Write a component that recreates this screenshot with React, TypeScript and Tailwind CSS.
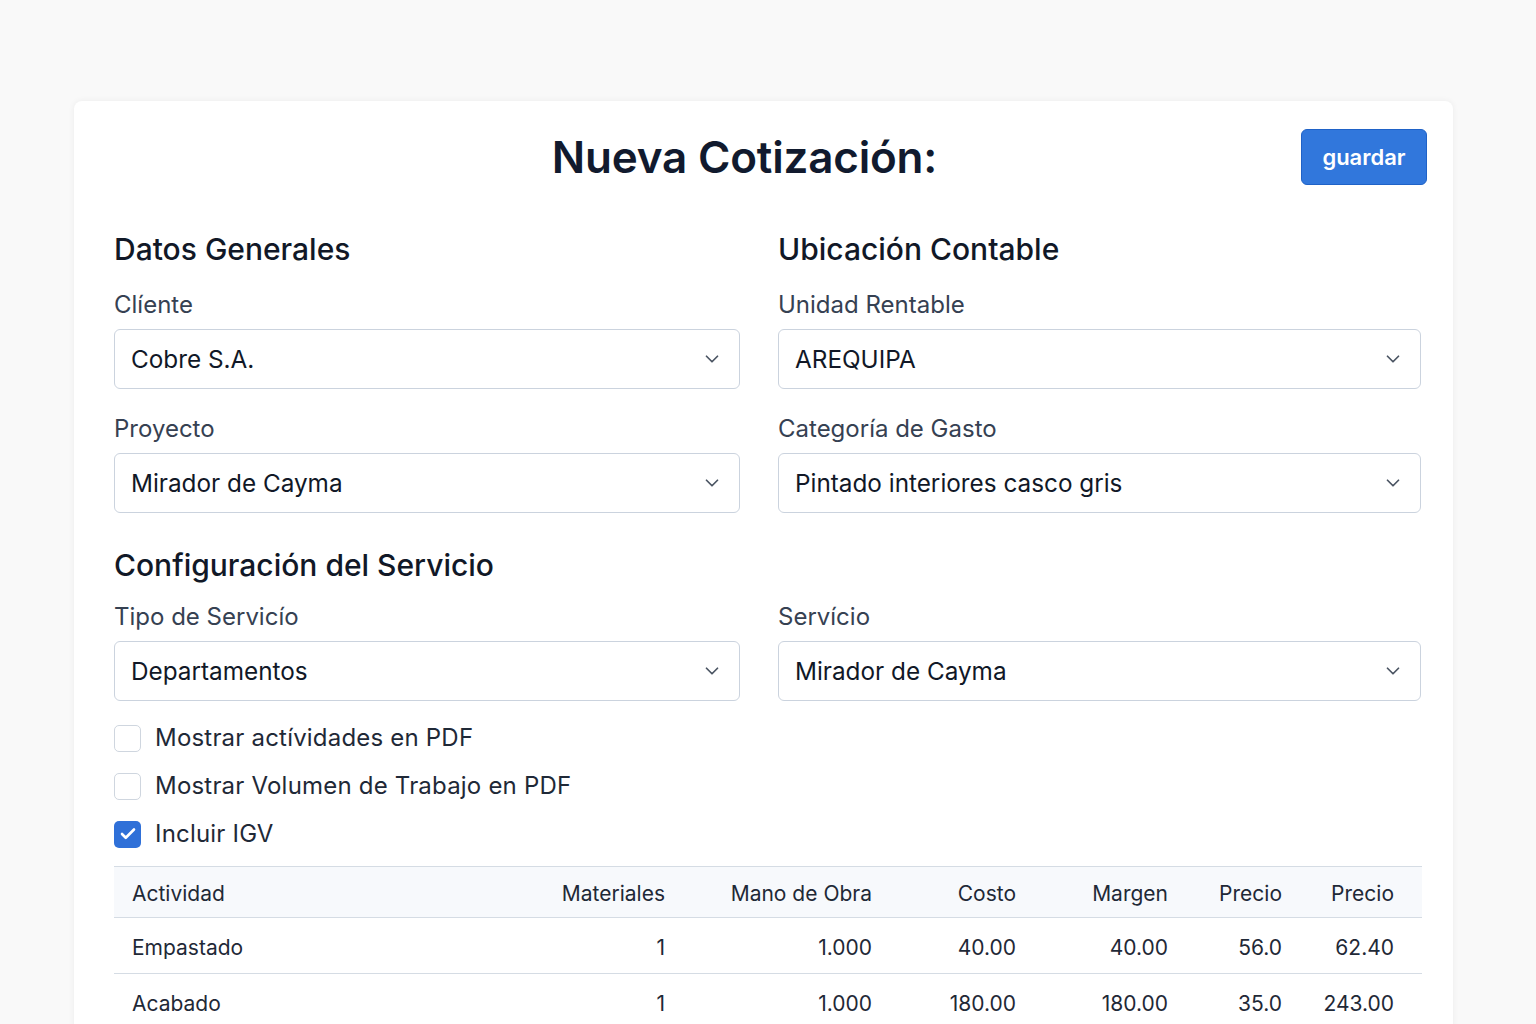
import React from "react";
import { ChevronDown, Check } from "lucide-react";

const rows = [
  { name: "Empastado", mat: "1", mano: "1.000", costo: "40.00", margen: "40.00", p1: "56.0", p2: "62.40" },
  { name: "Acabado", mat: "1", mano: "1.000", costo: "180.00", margen: "180.00", p1: "35.0", p2: "243.00" },
];

function Field({ label, value }: { label: string; value: string }) {
  return (
    <div>
      <div className="h-8 leading-8 text-[24px] text-[#364152]">{label}</div>
      <div className="mt-2 h-[60px] flex items-center justify-between rounded-md border border-[#cbd3de] bg-white pl-4 pr-4">
        <span className="text-[24.3px] text-[#111827]">{value}</span>
        <ChevronDown size={22} strokeWidth={1.9} className="text-[#4b5563]" />
      </div>
    </div>
  );
}

function Box({ checked, label }: { checked?: boolean; label: string }) {
  return (
    <label className="flex items-center gap-[14px] h-12">
      {checked ? (
        <span className="w-[27px] h-[27px] rounded-[5px] bg-[#2f70d8] flex items-center justify-center">
          <Check size={18} strokeWidth={3.5} className="text-white" />
        </span>
      ) : (
        <span className="w-[27px] h-[27px] rounded-[5px] border border-[#cfd6df] bg-white" />
      )}
      <span className="text-[24px] tracking-[0.2px] text-[#1f2937]">{label}</span>
    </label>
  );
}

export default function App() {
  return (
    <div className="min-h-screen bg-[#f9f9f9] pt-[101px] font-['Inter',sans-serif]">
      <div className="ml-[74px] w-[1379px] h-[940px] overflow-hidden rounded-lg bg-white shadow-[0_0_6px_rgba(0,0,0,0.06)] pl-10 pr-8 pt-7">
        {/* header */}
        <div className="relative flex h-14 items-center justify-end">
          <h1 className="absolute left-0 right-[46px] text-center text-[44px] font-semibold text-[#111a2e] tracking-[-0.2px]">
            Nueva Cotización:
          </h1>
          <button className="mr-[-6px] h-14 w-[126px] rounded-md border border-[#1f62c7] bg-[#3177dc] text-[22px] font-semibold text-white">
            guardar
          </button>
        </div>

        <div className="mt-[46px] grid grid-cols-[626px_643px] gap-x-[38px]">
          <div>
            <h2 className="h-9 leading-9 text-[30px] font-medium text-[#111827]">Datos Generales</h2>
            <div className="mt-[22px]">
              <Field label="Clíente" value="Cobre S.A." />
            </div>
            <div className="mt-[24px]">
              <Field label="Proyecto" value="Mirador de Cayma" />
            </div>
          </div>
          <div>
            <h2 className="h-9 leading-9 text-[30px] font-medium text-[#111827]">Ubicación Contable</h2>
            <div className="mt-[22px]">
              <Field label="Unidad Rentable" value="AREQUIPA" />
            </div>
            <div className="mt-[24px]">
              <Field label="Categoría de Gasto" value="Pintado interiores casco gris" />
            </div>
          </div>
        </div>

        <h2 className="mt-[34px] h-9 leading-9 text-[30px] font-medium text-[#111827]">Configuración del Servicio</h2>
        <div className="mt-[18px] grid grid-cols-[626px_643px] gap-x-[38px]">
          <Field label="Tipo de Servicío" value="Departamentos" />
          <Field label="Servício" value="Mirador de Cayma" />
        </div>

        <div className="mt-[13px] flex flex-col">
          <Box label="Mostrar actívidades en PDF" />
          <Box label="Mostrar Volumen de Trabajo en PDF" />
          <Box checked label="Incluir IGV" />
        </div>

        <table className="mt-[8px] w-[1308px] border-collapse text-[21px] text-[#1f2937]">
          <thead>
            <tr className="h-[51px] bg-[#f7f9fc] border-t border-b border-[#d5dce4]">
              <th className="pl-[18px] pt-1 text-left font-normal">Actividad</th>
              <th className="w-[160px] pt-1 text-right font-normal">Materiales</th>
              <th className="w-[207px] pt-1 text-right font-normal">Mano de Obra</th>
              <th className="w-[144px] pt-1 text-right font-normal">Costo</th>
              <th className="w-[152px] pt-1 text-right font-normal">Margen</th>
              <th className="w-[114px] pt-1 text-right font-normal">Precio</th>
              <th className="w-[140px] pt-1 pr-[28px] text-right font-normal">Precio</th>
            </tr>
          </thead>
          <tbody>
            {rows.map((r) => (
              <tr key={r.name} className="h-[56px] border-b border-[#d5dce4]">
                <td className="pl-[18px] pt-1">{r.name}</td>
                <td className="pt-1 text-right">{r.mat}</td>
                <td className="pt-1 text-right">{r.mano}</td>
                <td className="pt-1 text-right">{r.costo}</td>
                <td className="pt-1 text-right">{r.margen}</td>
                <td className="pt-1 text-right">{r.p1}</td>
                <td className="pt-1 pr-[28px] text-right">{r.p2}</td>
              </tr>
            ))}
          </tbody>
        </table>
      </div>
    </div>
  );
}
